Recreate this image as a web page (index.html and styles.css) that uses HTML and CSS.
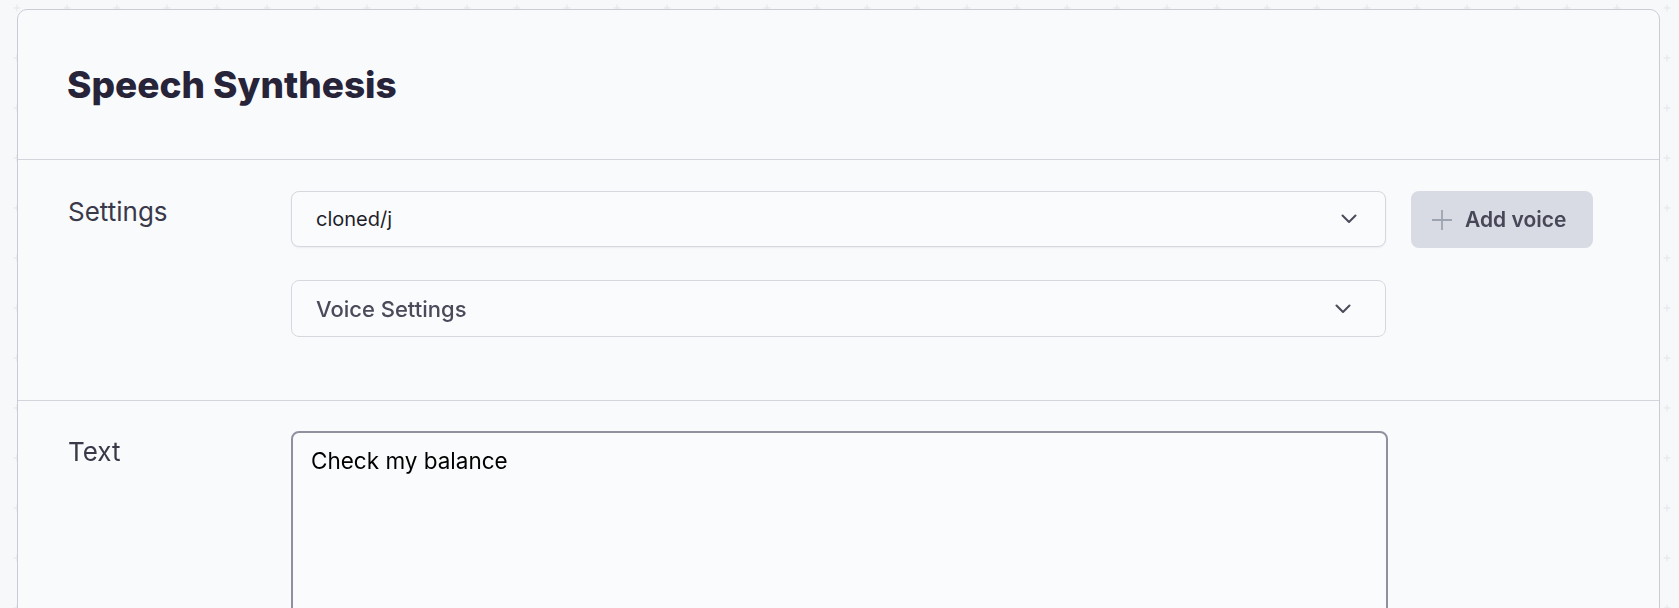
FILE: index.html
```html
<!DOCTYPE html>
<html lang="en">
    <head>
        <meta charset="UTF-8">
        <meta name="viewport" content="width=device-width, initial-scale=1.0">
        <title>Speech Synthesis</title>
        <link rel="stylesheet" href="styles.css">
    </head>
    <body>
        <!-- Grille de fond -->
        <svg class="grid-bg" width="100%" height="100%">
            <defs>
                <pattern id="cross" x="-8" y="-17" width="50" height="50" patternUnits="userSpaceOnUse">
                    <path d="M21.5 25h7M25 21.5v7" stroke="#e3e5ea" stroke-width="1" fill="none"/>
                </pattern>
            </defs>
            <rect width="100%" height="100%" fill="url(#cross)"/>
        </svg>

        <div class="page">
            <div class="card">
                <div class="card-header">
                    <h1>Speech Synthesis</h1>
                </div>

                <!-- Réglages -->
                <div class="section settings">
                    <div class="label">Settings</div>
                    <div class="fields">
                        <div class="row">
                            <div class="select">
                                <span>cloned/j</span>
                                <svg class="chevron" width="16" height="10" viewBox="0 0 16 10">
                                    <path d="M1.5 1.5L8 8l6.5-6.5" stroke="#4a4b5a" stroke-width="2" fill="none" stroke-linecap="round" stroke-linejoin="round"/>
                                </svg>
                            </div>
                            <button class="add-voice">
                                <svg width="22" height="22" viewBox="0 0 22 22">
                                    <path d="M11 1v20M1 11h20" stroke="#9ea3b0" stroke-width="1.8" fill="none"/>
                                </svg>
                                Add voice
                            </button>
                        </div>
                        <div class="row">
                            <div class="select disclosure">
                                <span>Voice Settings</span>
                                <svg class="chevron" width="16" height="10" viewBox="0 0 16 10">
                                    <path d="M1.5 1.5L8 8l6.5-6.5" stroke="#4a4b5a" stroke-width="2" fill="none" stroke-linecap="round" stroke-linejoin="round"/>
                                </svg>
                            </div>
                            <div class="spacer"></div>
                        </div>
                    </div>
                </div>

                <!-- Texte -->
                <div class="section text-section">
                    <div class="label">Text</div>
                    <div class="fields">
                        <div class="row">
                            <textarea class="text-input">Check my balance</textarea>
                            <div class="spacer"></div>
                        </div>
                    </div>
                </div>
            </div>
        </div>
    </body>
</html>
```

FILE: styles.css
```css
/* Style global */
body, html {
    margin: 0;
    padding: 0;
    height: 100%;
    background-color: #f7f8fa;
    font-family: 'Inter', 'Noto Sans', sans-serif;
    color: #272338;
    overflow: hidden;
}

.grid-bg {
    position: fixed;
    top: 0;
    left: 0;
    z-index: 0;
}

.page {
    position: relative;
    padding: 9px 19px 0 17px;
}

/* Carte principale */
.card {
    background-color: #f9fafc;
    border: 1px solid #c9ccd5;
    border-radius: 10px;
    height: 700px;
}

.card-header {
    padding: 55px 50px 54px 49px;
    border-bottom: 1px solid #d2d5dc;
}

.card-header h1 {
    margin: 0;
    font-size: 37px;
    line-height: 40px;
    font-weight: 800;
    color: #272338;
}

/* Sections */
.section {
    display: flex;
    padding: 31px 0 0 50px;
}

.settings {
    padding-bottom: 63px;
    border-bottom: 1px solid #d2d5dc;
}

.text-section {
    padding-top: 30px;
}

.label {
    width: 223px;
    flex-shrink: 0;
    font-size: 26px;
    line-height: 32px;
    margin-top: 5px;
    color: #3a3949;
}

.text-section .label {
    margin-top: 5px;
}

.fields {
    flex-grow: 1;
    display: flex;
    flex-direction: column;
    gap: 32px;
}

.row {
    display: flex;
    gap: 25px;
}

/* Listes déroulantes */
.select {
    width: 1095px;
    height: 56px;
    box-sizing: border-box;
    display: flex;
    align-items: center;
    justify-content: space-between;
    padding: 0 28px 0 24px;
    background-color: #fafbfc;
    border: 1px solid #d5d8df;
    border-radius: 8px;
    box-shadow: 0 1px 2px rgba(20, 20, 40, 0.06);
    font-size: 20px;
    color: #1f1e2b;
}

.select.disclosure {
    height: 57px;
    padding-right: 34px;
    box-shadow: none;
    font-size: 22px;
    font-weight: 500;
    color: #4a4a5a;
}

.chevron {
    flex-shrink: 0;
}

/* Bouton ajout */
.add-voice {
    display: flex;
    align-items: center;
    gap: 12px;
    height: 57px;
    padding: 0 27px 0 20px;
    background-color: #d8dbe3;
    border: none;
    border-radius: 8px;
    font-family: 'Inter', 'Noto Sans', sans-serif;
    font-size: 21px;
    font-weight: 600;
    color: #474757;
    cursor: pointer;
}

.spacer {
    width: 182px;
}

/* Zone de texte */
.text-input {
    width: 1097px;
    height: 230px;
    box-sizing: border-box;
    padding: 13px 18px;
    background-color: #fafbfc;
    border: 2px solid #8f929e;
    border-radius: 8px;
    font-family: 'Inter', 'Noto Sans', sans-serif;
    font-size: 22.5px;
    line-height: 30px;
    color: #000000;
    resize: none;
    outline: none;
}
```
